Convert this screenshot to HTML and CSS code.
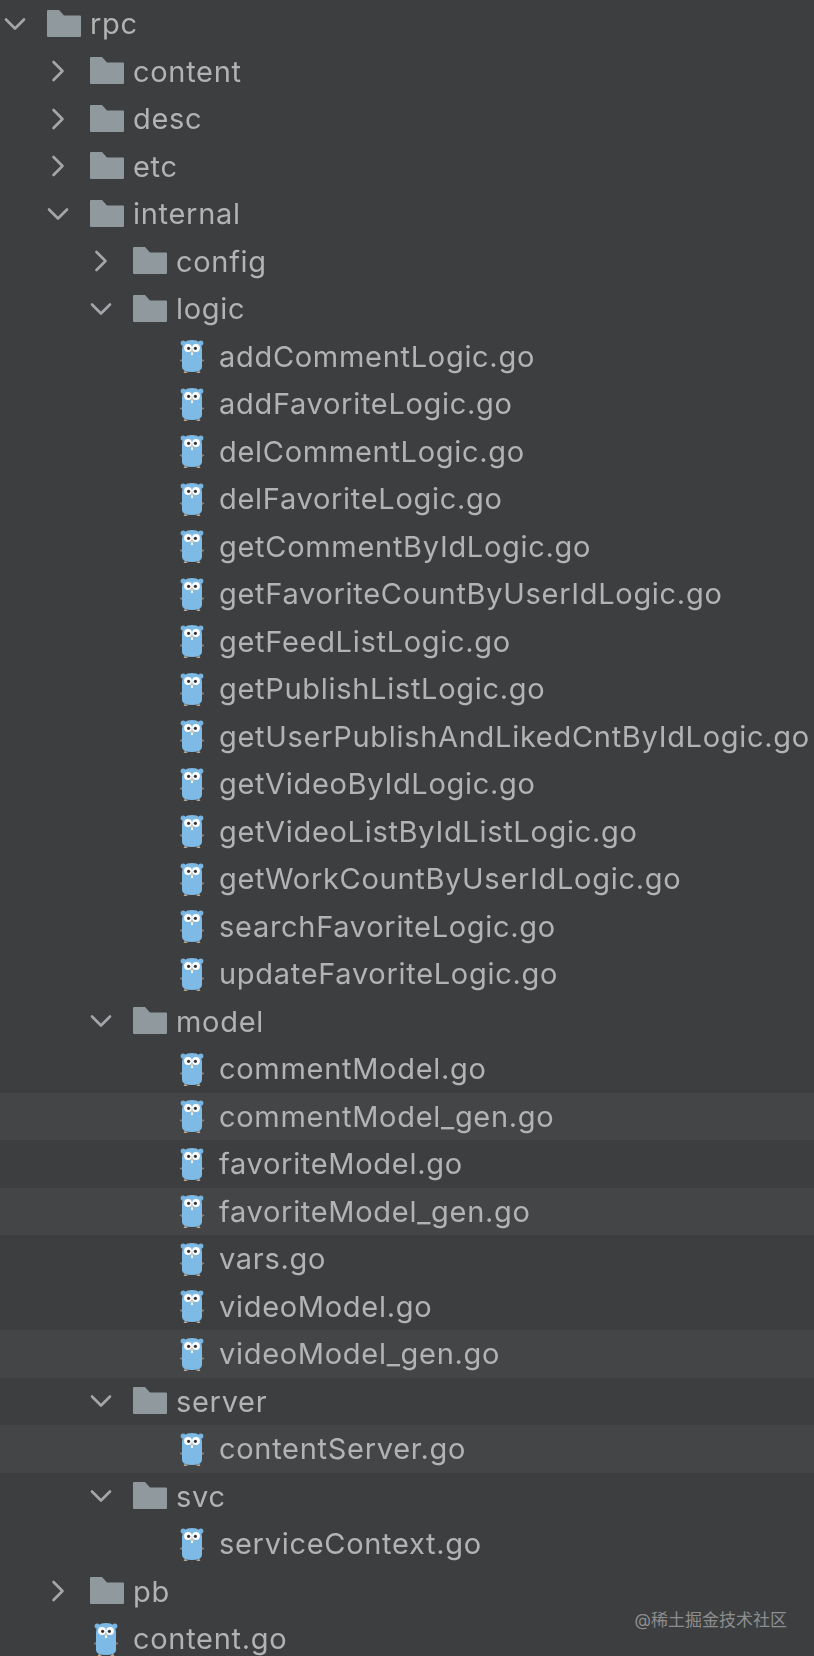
FILE: index.html
```html
<!DOCTYPE html>
<html lang="en">
<head>
<meta charset="utf-8">
<title>rpc project tree</title>
<link rel="stylesheet" href="styles.css">
</head>
<body>
<svg class="defs" width="0" height="0" aria-hidden="true">
  <symbol id="folder" viewBox="0 0 34 27">
    <path d="M0 1Q0 0 1 0H12L17 5.5H33Q34 5.5 34 6.5V26Q34 27 33 27H1Q0 27 0 26Z" fill="#90999d"/>
  </symbol>
  <symbol id="open" viewBox="0 0 24 24"><path d="M3 7.5L12 16.5L21 7.5" fill="none" stroke="#a4a7a9" stroke-width="2.6" stroke-linecap="round" stroke-linejoin="round"/></symbol>
  <symbol id="closed" viewBox="0 0 24 24"><path d="M7.5 3L16.5 12L7.5 21" fill="none" stroke="#a4a7a9" stroke-width="2.6" stroke-linecap="round" stroke-linejoin="round"/></symbol>
  <symbol id="gopher" viewBox="0 0 24 34">
    <path d="M1.5 20L0 21.5L1.5 23ZM22.5 20L24 21.5L22.5 23Z" fill="#b9a68f"/>
    <path d="M5 31.5L3.5 34H8ZM19 31.5L20.5 34H16Z" fill="#b9a68f"/>
    <circle cx="3.2" cy="4" r="2.6" fill="#76b3de"/>
    <circle cx="20.8" cy="4" r="2.6" fill="#76b3de"/>
    <path d="M2 10Q2 1 12 1Q22 1 22 10V28Q22 33 12 33Q2 33 2 28Z" fill="#7dbae6"/>
    <circle cx="8" cy="9" r="3.9" fill="#fff"/>
    <circle cx="16" cy="9" r="3.9" fill="#fff"/>
    <circle cx="8.6" cy="9.3" r="1.6" fill="#333"/>
    <circle cx="15.4" cy="9.3" r="1.6" fill="#333"/>
    <ellipse cx="12" cy="12.6" rx="1.8" ry="1.2" fill="#d9c7a8"/>
    <rect x="11" y="13.5" width="2" height="2.6" fill="#f2f2f2"/>
  </symbol>
</svg>
<main class="tree">
  <div class="row lv0"><svg class="chev"><use href="#open"/></svg><svg class="folder"><use href="#folder"/></svg><span class="name">rpc</span></div>
  <div class="row lv1"><svg class="chev"><use href="#closed"/></svg><svg class="folder"><use href="#folder"/></svg><span class="name">content</span></div>
  <div class="row lv1"><svg class="chev"><use href="#closed"/></svg><svg class="folder"><use href="#folder"/></svg><span class="name">desc</span></div>
  <div class="row lv1"><svg class="chev"><use href="#closed"/></svg><svg class="folder"><use href="#folder"/></svg><span class="name">etc</span></div>
  <div class="row lv1"><svg class="chev"><use href="#open"/></svg><svg class="folder"><use href="#folder"/></svg><span class="name">internal</span></div>
  <div class="row lv2"><svg class="chev"><use href="#closed"/></svg><svg class="folder"><use href="#folder"/></svg><span class="name">config</span></div>
  <div class="row lv2"><svg class="chev"><use href="#open"/></svg><svg class="folder"><use href="#folder"/></svg><span class="name">logic</span></div>
  <div class="row lv3"><svg class="gopher"><use href="#gopher"/></svg><span class="name">addCommentLogic.go</span></div>
  <div class="row lv3"><svg class="gopher"><use href="#gopher"/></svg><span class="name">addFavoriteLogic.go</span></div>
  <div class="row lv3"><svg class="gopher"><use href="#gopher"/></svg><span class="name">delCommentLogic.go</span></div>
  <div class="row lv3"><svg class="gopher"><use href="#gopher"/></svg><span class="name">delFavoriteLogic.go</span></div>
  <div class="row lv3"><svg class="gopher"><use href="#gopher"/></svg><span class="name">getCommentByIdLogic.go</span></div>
  <div class="row lv3"><svg class="gopher"><use href="#gopher"/></svg><span class="name">getFavoriteCountByUserIdLogic.go</span></div>
  <div class="row lv3"><svg class="gopher"><use href="#gopher"/></svg><span class="name">getFeedListLogic.go</span></div>
  <div class="row lv3"><svg class="gopher"><use href="#gopher"/></svg><span class="name">getPublishListLogic.go</span></div>
  <div class="row lv3"><svg class="gopher"><use href="#gopher"/></svg><span class="name">getUserPublishAndLikedCntByIdLogic.go</span></div>
  <div class="row lv3"><svg class="gopher"><use href="#gopher"/></svg><span class="name">getVideoByIdLogic.go</span></div>
  <div class="row lv3"><svg class="gopher"><use href="#gopher"/></svg><span class="name">getVideoListByIdListLogic.go</span></div>
  <div class="row lv3"><svg class="gopher"><use href="#gopher"/></svg><span class="name">getWorkCountByUserIdLogic.go</span></div>
  <div class="row lv3"><svg class="gopher"><use href="#gopher"/></svg><span class="name">searchFavoriteLogic.go</span></div>
  <div class="row lv3"><svg class="gopher"><use href="#gopher"/></svg><span class="name">updateFavoriteLogic.go</span></div>
  <div class="row lv2"><svg class="chev"><use href="#open"/></svg><svg class="folder"><use href="#folder"/></svg><span class="name">model</span></div>
  <div class="row lv3"><svg class="gopher"><use href="#gopher"/></svg><span class="name">commentModel.go</span></div>
  <div class="row lv3 generated"><svg class="gopher"><use href="#gopher"/></svg><span class="name">commentModel_gen.go</span></div>
  <div class="row lv3"><svg class="gopher"><use href="#gopher"/></svg><span class="name">favoriteModel.go</span></div>
  <div class="row lv3 generated"><svg class="gopher"><use href="#gopher"/></svg><span class="name">favoriteModel_gen.go</span></div>
  <div class="row lv3"><svg class="gopher"><use href="#gopher"/></svg><span class="name">vars.go</span></div>
  <div class="row lv3"><svg class="gopher"><use href="#gopher"/></svg><span class="name">videoModel.go</span></div>
  <div class="row lv3 generated"><svg class="gopher"><use href="#gopher"/></svg><span class="name">videoModel_gen.go</span></div>
  <div class="row lv2"><svg class="chev"><use href="#open"/></svg><svg class="folder"><use href="#folder"/></svg><span class="name">server</span></div>
  <div class="row lv3 generated"><svg class="gopher"><use href="#gopher"/></svg><span class="name">contentServer.go</span></div>
  <div class="row lv2"><svg class="chev"><use href="#open"/></svg><svg class="folder"><use href="#folder"/></svg><span class="name">svc</span></div>
  <div class="row lv3"><svg class="gopher"><use href="#gopher"/></svg><span class="name">serviceContext.go</span></div>
  <div class="row lv1"><svg class="chev"><use href="#closed"/></svg><svg class="folder"><use href="#folder"/></svg><span class="name">pb</span></div>
  <div class="row lv1 file-top"><svg class="gopher"><use href="#gopher"/></svg><span class="name">content.go</span></div>
</main>
<div class="watermark">@稀土掘金技术社区</div>
</body>
</html>
```

FILE: styles.css
```css
html, body {
  margin: 0;
  height: 1656px;
  overflow: hidden;
  background: #3d3e40;
}
body {
  position: relative;
  font-family: Inter, "Noto Sans CJK SC", sans-serif;
}
.defs {
  display: block;
  height: 0;
}
.tree {
  display: flex;
  flex-direction: column;
  filter: blur(0.6px);
}
.row {
  display: flex;
  align-items: center;
  flex: none;
  height: 47.5px;
  box-sizing: border-box;
}
.generated {
  background: #444547;
}
.lv0 { padding-left: 3px; }
.lv1 { padding-left: 46px; }
.lv2 { padding-left: 89px; }
.lv3 { padding-left: 180px; }
.chev {
  flex: none;
  width: 24px;
  height: 24px;
  margin-right: 20px;
}
.folder {
  flex: none;
  width: 34px;
  height: 27px;
  margin-right: 9px;
  margin-top: -1px;
}
.gopher {
  flex: none;
  width: 24px;
  height: 34px;
  margin-right: 15px;
}
.file-top .gopher {
  margin-left: 48px;
}
.name {
  color: #b2b3b4;
  font-size: 29px;
  letter-spacing: 0.7px;
  line-height: 47px;
  white-space: nowrap;
}
.watermark {
  position: absolute;
  right: 27px;
  top: 1609px;
  color: #8d8e90;
  font-size: 17px;
  line-height: 22px;
}
```
